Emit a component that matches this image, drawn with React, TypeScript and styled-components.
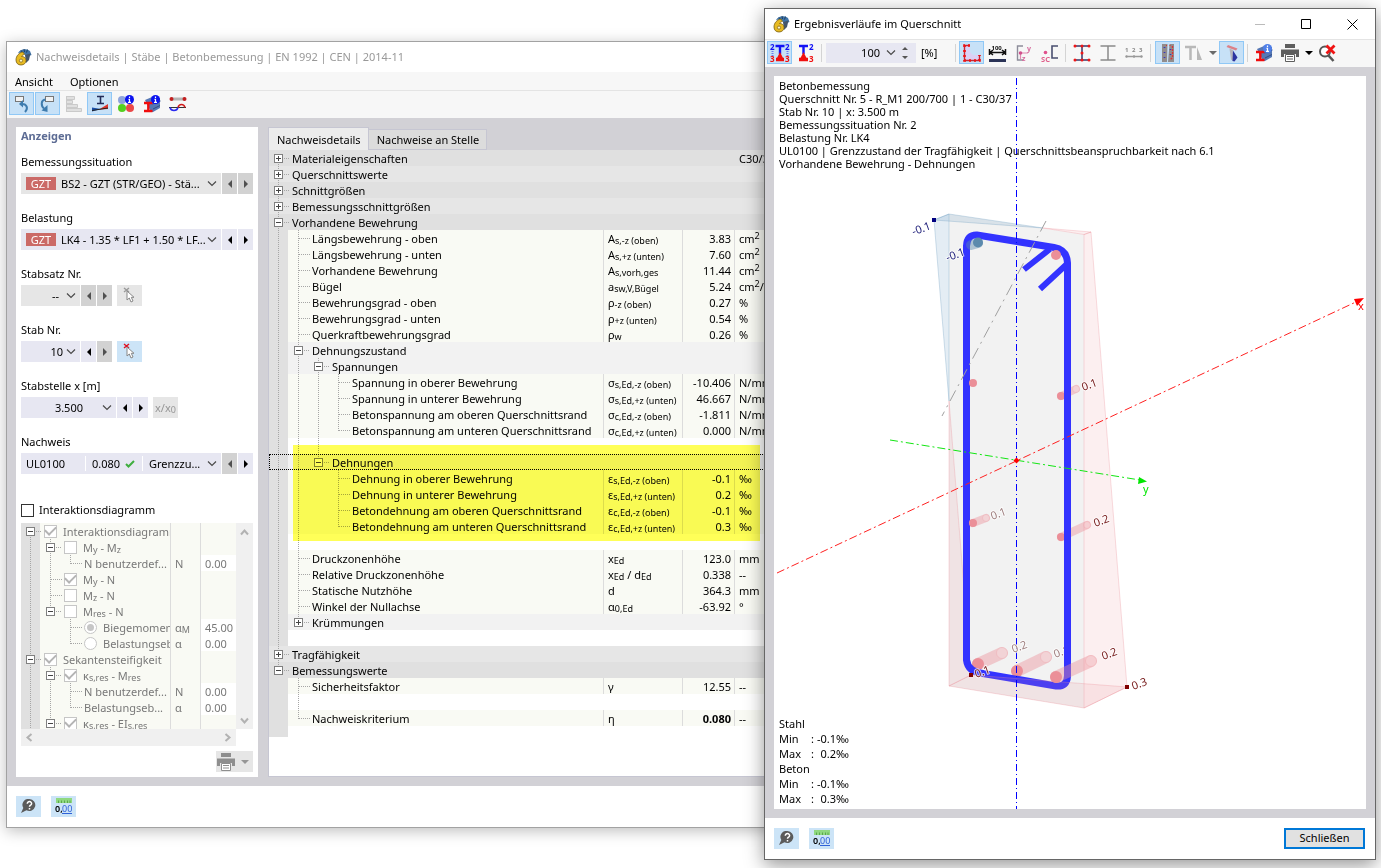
import React from 'react';
import styled, { createGlobalStyle, css } from 'styled-components';

const FONT = '"Noto Sans", "Open Sans", sans-serif';

const GlobalStyle = createGlobalStyle`
  * { box-sizing: border-box; }
  body { margin: 0; background: #fff; color: #000; font: 11px/16px ${FONT}; }
  button, select, input { font: inherit; color: inherit; margin: 0; }
  sub, sup { font-size: 9px; line-height: 0; }
  sub { vertical-align: -1px; }
  sup { vertical-align: 4px; }
`;

/* ---------- windows ---------- */

const Desktop = styled.main`
  display: grid;
  grid-template-columns: minmax(0, 758fr) minmax(0, 612fr);
  align-items: start;
  min-height: 100vh;
  padding: 8px 5px 8px 6px;
`;

const WindowFrame = styled.section<{ $active?: boolean }>`
  grid-row: 1;
  display: flex;
  flex-direction: column;
  min-width: 0;
  background: #fff;
  border: 1px solid ${p => (p.$active ? '#666' : '#a2a2a2')};
  box-shadow: ${p => (p.$active ? '0 5px 18px rgba(0,0,0,.42)' : '0 3px 14px rgba(0,0,0,.26)')};
  ${p =>
    p.$active
      ? css`grid-column: 2; z-index: 1;`
      : css`grid-column: 1 / 3; margin: 33px 16px 0 0;`}
`;

const TitleBar = styled.header<{ $muted?: boolean }>`
  display: flex;
  align-items: center;
  height: 30px;
  padding-left: 7px;
  gap: 4px;
  color: ${p => (p.$muted ? '#999' : '#000')};
`;

const WindowTitle = styled.h1`
  flex: 1;
  margin: 0;
  font-size: 11px;
  font-weight: 400;
  white-space: nowrap;
`;

const CaptionButtons = styled.div`
  display: flex;
`;

const CaptionButton = styled.button`
  width: 46px;
  height: 30px;
  padding: 0;
  border: 0;
  background: none;
  display: grid;
  place-items: center;
`;

const MenuBar = styled.nav`
  display: flex;
  gap: 17px;
  height: 18px;
  padding: 0 8px;
  background: #f7f7f7;
`;

const MenuItem = styled.button`
  border: 0;
  padding: 2px 0 0;
  background: none;
  line-height: 16px;
`;

const ToolBar = styled.div`
  display: flex;
  align-items: center;
  gap: 1px;
  height: 28px;
  padding: 0 2px 2px;
  background: #f7f7f7;
  border-top: 1px solid #e4e4e4;
`;

const ToolButton = styled.button<{ $on?: boolean }>`
  flex: none;
  width: 25px;
  height: 23px;
  padding: 0;
  display: grid;
  place-items: center;
  border: 1px solid ${p => (p.$on ? '#90c8f6' : 'transparent')};
  background: ${p => (p.$on ? '#c7e1f7' : 'none')};
`;

const DropArrow = styled.button<{ $dim?: boolean }>`
  flex: none;
  width: 11px;
  height: 23px;
  padding: 0;
  border: 0;
  background: none;
  color: ${p => (p.$dim ? '#6a6a6a' : '#000')};
  display: grid;
  place-items: center;
`;

const Divider = styled.span<{ $wide?: boolean }>`
  flex: none;
  width: 1px;
  height: 18px;
  margin: 0 ${p => (p.$wide ? 3 : 2)}px;
  background: #d4d4d4;
`;

const Workspace = styled.div`
  display: flex;
  gap: 10px;
  padding: 9px;
  background: #d2d1d6;
`;

const Footer = styled.footer`
  display: flex;
  align-items: center;
  gap: 10px;
  height: 41px;
  padding: 0 10px 1px 9px;
`;

const FlatButton = styled.button`
  flex: none;
  width: 25px;
  height: 21px;
  padding: 0;
  border: 0;
  background: #cce4f7;
  display: grid;
  place-items: center;
  &:disabled { background: #e6e6e6; color: #969696; }
`;

const CloseButton = styled.button`
  width: 81px;
  height: 21px;
  margin-left: auto;
  padding: 0;
  border: 2px solid #0078d7;
  background: #e1e1e1;
`;

/* ---------- left panel ---------- */

const SidePanel = styled.aside`
  flex: none;
  width: 242px;
  padding: 1px 5px 5px;
  background: #fff;
`;

const PanelTitle = styled.h2`
  margin: 0 0 10px;
  font-size: 11px;
  line-height: 16px;
  font-weight: 700;
  color: #5d6c94;
`;

const Field = styled.div`
  display: flex;
  flex-direction: column;
  gap: 3px;
  margin-bottom: 16px;
`;

const FieldLabel = styled.label`
  line-height: 16px;
`;

const ControlRow = styled.div`
  display: flex;
  gap: 1px;
`;

const Combo = styled.div<{ $width: number; $off?: boolean }>`
  display: flex;
  align-items: center;
  flex: none;
  width: ${p => p.$width}px;
  height: 21px;
  padding: 0 4px 0 5px;
  background: ${p => (p.$off ? '#e6e6e6' : '#e7e7f2')};
`;

const ComboSelect = styled.select<{ $right?: boolean; $gap?: number }>`
  flex: 1;
  min-width: 0;
  height: 21px;
  padding: 0 ${p => p.$gap ?? 0}px 0 0;
  border: 0;
  appearance: none;
  background: none;
  opacity: 1;
  text-align: ${p => (p.$right ? 'right' : 'left')};
  text-align-last: ${p => (p.$right ? 'right' : 'left')};
  &:disabled { color: #000; opacity: 1; }
`;

const Badge = styled.span`
  width: 30px;
  height: 13px;
  margin-right: 5px;
  background: #cb6a67;
  color: #fff;
  line-height: 13px;
  text-align: center;
`;

const ComboPart = styled.span<{ $width: number }>`
  display: flex;
  align-items: center;
  gap: 5px;
  width: ${p => p.$width}px;
  height: 15px;
  margin-right: 6px;
  border-right: 1px solid #fff;
`;

const StepButton = styled.button`
  flex: none;
  width: 15px;
  height: 21px;
  padding: 0;
  border: 0;
  background: #e7e7f2;
  display: grid;
  place-items: center;
  &:disabled { background: #d2d2d2; color: #505050; }
`;

const SideButton = styled(FlatButton)`
  margin-left: 4px;
`;

const CheckLabel = styled.label`
  display: flex;
  align-items: center;
  gap: 5px;
  margin: 28px 0 5px;
`;

const Tick = styled.input`
  flex: none;
  appearance: none;
  width: 13px;
  height: 13px;
  border: 1px solid #333;
  background: #fff;
  display: grid;
  place-items: center;
  &:disabled { border-color: #c6c6c6; }
  &[type='radio'] { border-radius: 50%; }
  &[type='checkbox']:checked::before {
    content: '';
    width: 5px;
    height: 9px;
    margin-top: -3px;
    border: solid #b4b4b4;
    border-width: 0 2px 2px 0;
    transform: rotate(45deg);
  }
  &[type='radio']:checked::before {
    content: '';
    width: 7px;
    height: 7px;
    border-radius: 50%;
    background: #c6c6c6;
  }
`;

const ScrollArea = styled.div`
  display: grid;
  grid-template-columns: 1fr 17px;
  grid-template-rows: 206px 17px;
`;

const ScrollView = styled.div`
  overflow: hidden;
  background: linear-gradient(90deg, #e0e0e0 19px, #f9faf3 19px);
  color: #787878;
`;

const ScrollBar = styled.div<{ $horizontal?: boolean }>`
  display: flex;
  flex-direction: ${p => (p.$horizontal ? 'row' : 'column')};
  justify-content: space-between;
  align-items: center;
  padding: ${p => (p.$horizontal ? '0 4px' : '5px 0 4px')};
  background: #f0f0f0;
  color: #b2b2b2;
`;

const PanelActions = styled.div`
  display: flex;
  justify-content: flex-end;
  margin-top: 5px;
`;

const PrintButton = styled(FlatButton)`
  width: 37px;
  grid-template-columns: 20px 17px;
`;

/* ---------- tree tables ---------- */

const TreeTable = styled.table`
  width: 100%;
  border-collapse: collapse;
  border-spacing: 0;
  table-layout: fixed;
`;

type Tone = 'dark' | 'mid' | 'sub' | 'leaf' | 'gap';
const TONES: Record<Tone, string> = {
  dark: '#e0e0e0',
  mid: '#e6e6e6',
  sub: '#f2f2f2',
  leaf: '#f9faf4',
  gap: '#fff',
};

const TreeRow = styled.tr<{ $tone: Tone; $selected?: boolean }>`
  height: 16px;
  background: ${p => TONES[p.$tone]};
  ${p => p.$selected && 'outline: 1px dotted #000; outline-offset: -1px;'}
`;

const Cell = styled.td<{ $line?: boolean; $right?: boolean; $bold?: boolean; $white?: boolean }>`
  height: 16px;
  padding: 2px ${p => (p.$right ? 3 : 0)}px 0 5px;
  line-height: 14px;
  white-space: nowrap;
  text-align: ${p => (p.$right ? 'right' : 'left')};
  font-weight: ${p => (p.$bold ? 700 : 400)};
  box-shadow: ${p => (p.$line ? 'inset 1px 0 #dcdcdc' : 'none')};
  ${p => p.$white && 'background: #fff;'}
`;

const NameCell = styled.td`
  height: 16px;
  padding: 0;
`;

const NameLine = styled.div`
  display: flex;
  align-items: center;
  height: 16px;
  line-height: 16px;
  white-space: nowrap;
  overflow-x: clip;
  overflow-y: visible;
`;

const NameText = styled.span`
  padding: 2px 0 0 4px;
`;

const TickSlot = styled.span`
  display: flex;
  flex: none;
  width: 19px;
  padding-left: 4px;
`;

const GuideCell = styled.svg<{ $gutter?: boolean; $shade?: boolean }>`
  flex: none;
  width: ${p => (p.$gutter ? 19 : 20)}px;
  height: 16px;
  overflow: visible;
  background: ${p => (p.$shade ? '#e0e0e0' : 'none')};
`;

/* v: line through, t: tee, l: elbow, + and -: fold box, letters after the box give its line ends (u, d) */
const Guide = ({ kind, first, shade }: { kind: string; first: boolean; shade: boolean }) => {
  const cx = first ? 9.5 : 10.5;
  const head = kind[0];
  const box = head === '+' || head === '-';
  const up = box ? kind.includes('u') : 'vtl'.includes(head);
  const down = box ? kind.includes('d') : 'vt'.includes(head);
  const dots = { stroke: '#a6a6a6', strokeDasharray: '1 1', fill: 'none' };
  return (
    <GuideCell $gutter={first} $shade={shade && first} aria-hidden>
      {up && <path d={`M${cx} 0V9`} {...dots} />}
      {down && <path d={`M${cx} 8V16`} {...dots} />}
      {(head === 't' || head === 'l') && <path d={`M${cx + 0.5} 8.5h11`} {...dots} />}
      {box && (
        <>
          <path d={`M${cx + 5.5} 8.5h6`} {...dots} />
          <rect x={cx - 4} y="4.5" width="8" height="8" fill="#fff" stroke="#808080" />
          <path d={`M${cx - 2.5} 8.5h5${head === '+' ? `M${cx} 6v5` : ''}`} stroke="#444" fill="none" />
        </>
      )}
    </GuideCell>
  );
};

interface Row {
  guides: string[];
  tone: Tone;
  name?: React.ReactNode;
  symbol?: React.ReactNode;
  value?: string;
  unit?: React.ReactNode;
  bold?: boolean;
  selected?: boolean;
}

const S = ({ b, children }: { b: string; children: React.ReactNode }) => (
  <>
    {b}
    <sub>{children}</sub>
  </>
);
const cm2 = <>cm<sup>2</sup></>;
const nmm2 = <>N/mm<sup>2</sup></>;

const leaf = (guides: string[], name: string, symbol: React.ReactNode, value: string, unit: React.ReactNode, bold = false): Row => ({
  guides, tone: 'leaf', name, symbol, value, unit, bold,
});

const ROWS: Row[] = [
  { guides: ['+d'], tone: 'dark', name: 'Materialeigenschaften', unit: 'C30/37' },
  { guides: ['+ud'], tone: 'mid', name: 'Querschnittswerte' },
  { guides: ['+ud'], tone: 'dark', name: 'Schnittgrößen' },
  { guides: ['+ud'], tone: 'mid', name: 'Bemessungsschnittgrößen' },
  { guides: ['-ud'], tone: 'dark', name: 'Vorhandene Bewehrung' },
  leaf(['v', 't'], 'Längsbewehrung - oben', <S b="A">s,-z (oben)</S>, '3.83', cm2),
  leaf(['v', 't'], 'Längsbewehrung - unten', <S b="A">s,+z (unten)</S>, '7.60', cm2),
  leaf(['v', 't'], 'Vorhandene Bewehrung', <S b="A">s,vorh,ges</S>, '11.44', cm2),
  leaf(['v', 't'], 'Bügel', <S b="a">sw,V,Bügel</S>, '5.24', <>{cm2}/m</>),
  leaf(['v', 't'], 'Bewehrungsgrad - oben', <S b="ρ">-z (oben)</S>, '0.27', '%'),
  leaf(['v', 't'], 'Bewehrungsgrad - unten', <S b="ρ">+z (unten)</S>, '0.54', '%'),
  leaf(['v', 't'], 'Querkraftbewehrungsgrad', <S b="ρ">w</S>, '0.26', '%'),
  { guides: ['v', '-ud'], tone: 'sub', name: 'Dehnungszustand' },
  { guides: ['v', 'v', '-ud'], tone: 'sub', name: 'Spannungen' },
  leaf(['v', 'v', 'v', 't'], 'Spannung in oberer Bewehrung', <S b="σ">s,Ed,-z (oben)</S>, '-10.406', nmm2),
  leaf(['v', 'v', 'v', 't'], 'Spannung in unterer Bewehrung', <S b="σ">s,Ed,+z (unten)</S>, '46.667', nmm2),
  leaf(['v', 'v', 'v', 't'], 'Betonspannung am oberen Querschnittsrand', <S b="σ">c,Ed,-z (oben)</S>, '-1.811', nmm2),
  leaf(['v', 'v', 'v', 'l'], 'Betonspannung am unteren Querschnittsrand', <S b="σ">c,Ed,+z (unten)</S>, '0.000', nmm2),
  { guides: ['v', 'v', 'v'], tone: 'gap' },
  { guides: ['v', 'v', '-u'], tone: 'sub', name: 'Dehnungen', selected: true },
  leaf(['v', 'v', ' ', 't'], 'Dehnung in oberer Bewehrung', <S b="ε">s,Ed,-z (oben)</S>, '-0.1', '‰'),
  leaf(['v', 'v', ' ', 't'], 'Dehnung in unterer Bewehrung', <S b="ε">s,Ed,+z (unten)</S>, '0.2', '‰'),
  leaf(['v', 'v', ' ', 't'], 'Betondehnung am oberen Querschnittsrand', <S b="ε">c,Ed,-z (oben)</S>, '-0.1', '‰'),
  leaf(['v', 'v', ' ', 'l'], 'Betondehnung am unteren Querschnittsrand', <S b="ε">c,Ed,+z (unten)</S>, '0.3', '‰'),
  { guides: ['v', 'v'], tone: 'gap' },
  leaf(['v', 't'], 'Druckzonenhöhe', <S b="x">Ed</S>, '123.0', 'mm'),
  leaf(['v', 't'], 'Relative Druckzonenhöhe', <>x<sub>Ed</sub> / d<sub>Ed</sub></>, '0.338', '--'),
  leaf(['v', 't'], 'Statische Nutzhöhe', 'd', '364.3', 'mm'),
  leaf(['v', 't'], 'Winkel der Nullachse', <S b="α">0,Ed</S>, '-63.92', '°'),
  { guides: ['v', '+u'], tone: 'sub', name: 'Krümmungen' },
  { guides: ['v'], tone: 'gap' },
  { guides: ['+ud'], tone: 'mid', name: 'Tragfähigkeit' },
  { guides: ['-u'], tone: 'dark', name: 'Bemessungswerte' },
  leaf([' ', 't'], 'Sicherheitsfaktor', 'γ', '12.55', '--'),
  { guides: [' ', 'v'], tone: 'gap' },
  leaf([' ', 'l'], 'Nachweiskriterium', 'η', '0.080', '--', true),
];

interface OptionRow {
  guides: string[];
  name: React.ReactNode;
  tick?: 'checkbox' | 'radio';
  on?: boolean;
  symbol?: React.ReactNode;
  value?: string;
}

const OPTIONS: OptionRow[] = [
  { guides: ['-d'], tick: 'checkbox', on: true, name: 'Interaktionsdiagramm' },
  { guides: ['v', '-ud'], tick: 'checkbox', name: <>M<sub>y</sub> - M<sub>z</sub></> },
  { guides: ['v', 'v', 'l'], name: 'N benutzerdef...', symbol: 'N', value: '0.00' },
  { guides: ['v', 't'], tick: 'checkbox', on: true, name: <>M<sub>y</sub> - N</> },
  { guides: ['v', 't'], tick: 'checkbox', name: <>M<sub>z</sub> - N</> },
  { guides: ['v', '-u'], tick: 'checkbox', name: <>M<sub>res</sub> - N</> },
  { guides: ['v', ' ', 't'], tick: 'radio', on: true, name: 'Biegemoment', symbol: <S b="α">M</S>, value: '45.00' },
  { guides: ['v', ' ', 'l'], tick: 'radio', name: 'Belastungseb', symbol: 'α', value: '0.00' },
  { guides: ['-ud'], tick: 'checkbox', on: true, name: 'Sekantensteifigkeit' },
  { guides: ['v', '-ud'], tick: 'checkbox', on: true, name: <>κ<sub>s,res</sub> - M<sub>res</sub></> },
  { guides: ['v', 'v', 't'], name: 'N benutzerdef...', symbol: 'N', value: '0.00' },
  { guides: ['v', 'v', 'l'], name: 'Belastungseb...', symbol: 'α', value: '0.00' },
  { guides: ['v', '-ud'], tick: 'checkbox', on: true, name: <>κ<sub>s,res</sub> - EI<sub>s,res</sub></> },
];

/* ---------- right panel ---------- */

const DetailPanel = styled.div`
  flex: 1;
  min-width: 0;
  display: flex;
  flex-direction: column;
`;

const Tabs = styled.div`
  display: flex;
  align-items: flex-end;
  height: 23px;
`;

const Tab = styled.button<{ $active?: boolean }>`
  height: ${p => (p.$active ? 23 : 21)}px;
  padding: ${p => (p.$active ? '2px' : '0')} 7px 0 8px;
  border: 1px solid #c6c6d2;
  border-bottom-width: ${p => (p.$active ? 0 : 1)}px;
  border-left-width: ${p => (p.$active ? 1 : 0)}px;
  background: ${p => (p.$active ? '#ececec' : '#dcdcdc')};
`;

const DetailBody = styled.div`
  position: relative;
  flex: 1;
  background: #fff;
  border: 1px solid #c6c6d2;
  border-top: 0;
`;

const GutterTail = styled.div`
  width: 19px;
  height: 11px;
  background: #e0e0e0;
`;

const Marker = styled.div`
  position: absolute;
  top: 295px;
  left: 24px;
  width: 467px;
  height: 96px;
  background: #ffff58;
  mix-blend-mode: multiply;
  pointer-events: none;
`;

/* ---------- plot ---------- */

const ScaleInput = styled.input`
  width: 54px;
  height: 20px;
  padding: 0;
  border: 0;
  background: none;
  text-align: right;
`;

const ScaleBox = styled.div`
  display: flex;
  align-items: center;
  gap: 6px;
  width: 90px;
  height: 20px;
  margin: 0 4px 0 1px;
  background: #e7e7f2;
`;

const UnitLabel = styled.label`
  width: 31px;
`;

const PlotStage = styled.div`
  flex: 1;
  display: grid;
  min-width: 0;
  background: #fff;
`;

const Drawing = styled.svg`
  grid-area: 1 / 1;
  display: block;
  width: 100%;
  height: auto;
  font-family: ${FONT};
  font-size: 11px;
`;

const Caption = styled.div`
  grid-area: 1 / 1;
  padding: 3px 5px;
  line-height: 13px;
`;

const Stats = styled.div`
  grid-area: 1 / 1;
  align-self: end;
  justify-self: start;
  padding: 0 5px 3px;
  line-height: 15px;
`;

const StatLine = styled.div`
  display: grid;
  grid-template-columns: 32px 4px 21px 14px;
`;

const StatValue = styled.span`
  text-align: right;
`;

/* ---------- icons ---------- */

const svgProps = { fill: 'none', 'aria-hidden': true } as const;

const AppIcon = () => (
  <svg width="18" height="18" viewBox="0 0 18 18" {...svgProps}>
    <path d="M4 5C6 1 12 0 16 3l1.500 4-5 2C11 5 8 4 4 5z" fill="#3f74a8" />
    <path d="M7 2.500l1.500 2M10 1l.5 3M13.500 1.500l-1 3" stroke="#1f3f60" />
    <path d="M11 7l5.500-1.500L15 12l-3 3z" fill="#44566b" />
    <path d="M9 4C5 4.500 2 8 2 12c0 3 2 5 5 5s5-2 5-4.500S10 8.300 7.500 8.500c.5-1 1.500-1.800 3-2z" fill="#e8bb22" stroke="#7a5f14" strokeWidth=".8" />
    <circle cx="7" cy="12.600" r="1.600" fill="#fff5c4" stroke="#7a5f14" strokeWidth=".7" />
  </svg>
);

const Chevron = () => (
  <svg width="10" height="6" viewBox="0 0 10 6" {...svgProps}>
    <path d="M1 .5l4 4 4-4" stroke="#4a4a4a" strokeWidth="1.200" />
  </svg>
);

const Arrow = ({ dir }: { dir: 'l' | 'r' | 'd' }) => (
  <svg width="8" height="8" viewBox="0 0 8 8" {...svgProps}>
    <path d={{ l: 'M6 0v8L2 4z', r: 'M2 0v8l4-4z', d: 'M0 2h8L4 6z' }[dir]} fill="currentColor" />
  </svg>
);

const ScrollMark = ({ d }: { d: string }) => (
  <svg width="9" height="9" viewBox="0 0 9 9" {...svgProps}>
    <path d={d} stroke="currentColor" strokeWidth="2" />
  </svg>
);

const PickIcon = ({ cross }: { cross: string }) => (
  <svg width="17" height="17" viewBox="0 0 17 17" {...svgProps}>
    <path d="M3 1l5 4M8 1L3 5" stroke={cross} strokeWidth="1.400" />
    <path d="M6 4v9l2.300-2 1.700 4 2-1-1.700-3.700H13z" fill="#fff" stroke="#888" />
  </svg>
);

const PrinterIcon = ({ color }: { color: string }) => (
  <svg width="18" height="18" viewBox="0 0 18 18" {...svgProps}>
    <path d="M4 0h10v4H4zM0 5.500h18V13h-3v-3H3v3H0z" fill={color} />
    <path d="M4.500 10.500h9v7h-9z" fill="#fff" stroke={color} />
    <path d="M6 12.500h6M6 15h6" stroke={color} />
  </svg>
);

const HelpIcon = () => (
  <svg width="15" height="15" viewBox="0 0 15 15" {...svgProps}>
    <path d="M8.500 0a6 6 0 1 1-3 11.300L0 14l2.300-5A6 6 0 0 1 8.500 0z" fill="#5b5b5b" />
    <path d="M6.300 4.700c0-3 4.500-2.600 4.300 0-.1 1.500-2.100 1.500-2.100 3.100M8.500 9v1.600" stroke="#fff" strokeWidth="1.500" />
  </svg>
);

const UnitsIcon = () => (
  <svg width="18" height="16" viewBox="0 0 18 16" {...svgProps}>
    <rect x="1" y="0" width="16" height="5" fill="#8fd880" />
    <path d="M3.500 2.500V5M6.500 2.500V5M9.500 2.500V5M12.500 2.500V5M15 2.500V5" stroke="#5aa84c" />
    <text x="0" y="14" fontSize="9" fontWeight="600" fill="#000" fontFamily={FONT}>0,</text>
    <text x="7" y="14" fontSize="9" fill="#2f62d8" fontFamily={FONT}>00</text>
    <path d="M7 15.500h10" stroke="#2f62d8" />
  </svg>
);

const InfoBall = ({ x, fill = '#0a12f0' }: { x: number; fill?: string }) => (
  <>
    <circle cx={x} cy="4.500" r="4.500" fill={fill} />
    <path d={`M${x} 1.500v1.500M${x - 1} 4.300h1v3M${x - 1.5} 7.300h3`} stroke="#fff" strokeWidth="1.200" />
  </>
);

const BeamInfoIcon = ({ ball }: { ball?: string }) => (
  <svg width="18" height="18" viewBox="0 0 18 18" {...svgProps}>
    <path d="M2 5l7-3 8 1v10l-7 4H8z" fill="#5577b4" />
    <path d="M9.500 9l8-3M10 14l7-3.500" stroke="#2f4c86" />
    <path d="M1 8h8.500M5.300 8v8M1 16h8.500" stroke="#f00d0d" strokeWidth="2.400" />
    <InfoBall x={12.5} fill={ball} />
  </svg>
);

const UndoViewIcon = () => (
  <svg width="18" height="18" viewBox="0 0 18 18" {...svgProps}>
    <rect x="2.500" y="1.500" width="8" height="5" fill="#f2f2f2" stroke="#777" />
    <path d="M12 17c3.500-3.500 2-8-3-8" stroke="#3f7cae" strokeWidth="2" />
    <path d="M10 5v7.500L6 9z" fill="#3f7cae" />
  </svg>
);

const RedoViewIcon = () => (
  <svg width="18" height="18" viewBox="0 0 18 18" {...svgProps}>
    <rect x="6.500" y="1.500" width="8" height="5" fill="#f2f2f2" stroke="#777" />
    <path d="M6.500 4.500C1.500 5 2 11 5 13.500" stroke="#3f7cae" strokeWidth="2" />
    <path d="M2.500 15.500l6 1.500V10z" fill="#3f7cae" />
  </svg>
);

const BarsIcon = () => (
  <svg width="18" height="18" viewBox="0 0 18 18" {...svgProps}>
    <path d="M1.500 1v16M1.500 1.500h8v3h-8M1.500 5.500h6v3h-6M1.500 9.500h11v3h-11M1.500 13.500h15v3h-15" fill="#e0e0e0" stroke="#cacaca" />
  </svg>
);

const SlopeIcon = () => (
  <svg width="18" height="18" viewBox="0 0 18 18" {...svgProps}>
    <path d="M6 1.500h7M9.500 1.500v7M6 8.500h7" stroke="#222b58" strokeWidth="1.600" />
    <path d="M1 16.500v-4l9 1.500z" fill="#1a4fa8" />
    <path d="M17 9v5l-9 .5z" fill="#e0352b" />
    <path d="M1 15.500L17 13" stroke="#222" />
  </svg>
);

const SpheresIcon = () => (
  <svg width="18" height="18" viewBox="0 0 18 18" {...svgProps}>
    <circle cx="5" cy="5" r="4" fill="#8ea4dc" />
    <circle cx="5" cy="13" r="4" fill="#55cf1f" />
    <circle cx="13" cy="13" r="4" fill="#ea4848" />
    <InfoBall x={12.5} />
  </svg>
);

const CurvesIcon = () => (
  <svg width="18" height="18" viewBox="0 0 18 18" {...svgProps}>
    <path d="M2 4h14" stroke="#b5b5b5" strokeWidth="3" />
    <circle cx="2.500" cy="4" r="2" fill="#c21f1f" />
    <circle cx="15.500" cy="4" r="2" fill="#c21f1f" />
    <path d="M0 12.500h17" stroke="#333" />
    <path d="M1 12.500c1 4 7 4 8 0" stroke="#2a2af0" strokeWidth="1.500" />
    <path d="M9 12.500c1-4 6-4 7 0" stroke="#d01818" strokeWidth="1.500" />
  </svg>
);

const NumText = ({ x, y, fill, size = 8, children }: { x: number; y: number; fill: string; size?: number; children: string }) => (
  <text x={x} y={y} fill={fill} fontSize={size} fontWeight="700" fontFamily={FONT}>{children}</text>
);

const SectionPairIcon = () => (
  <svg width="20" height="20" viewBox="0 0 20 20" {...svgProps}>
    <path d="M5.500 3h9M10 3v8" stroke="#1212f5" strokeWidth="2.400" />
    <path d="M6 16.500h8" stroke="#f01010" strokeWidth="3.500" />
    <path d="M10 9l3.500 7h-7z" fill="#f01010" />
    <path d="M2.500 8v5M17.500 8v5" stroke="#6a7cf0" strokeDasharray="1 1" strokeWidth="2" />
    <NumText x={0} y={7} fill="#1212f5">2</NumText>
    <NumText x={15} y={7} fill="#1212f5">2</NumText>
    <NumText x={0} y={19} fill="#f01010">3</NumText>
    <NumText x={15} y={19} fill="#f01010">3</NumText>
  </svg>
);

const SectionSingleIcon = () => (
  <svg width="18" height="20" viewBox="0 0 18 20" {...svgProps}>
    <path d="M2 3h9M6.500 3v8" stroke="#1212f5" strokeWidth="2.400" />
    <path d="M2 16.500h9" stroke="#f01010" strokeWidth="3.500" />
    <path d="M6.500 9l3.500 7H3z" fill="#f01010" />
    <NumText x={12} y={7} fill="#1212f5">2</NumText>
    <NumText x={12} y={19} fill="#f01010">3</NumText>
  </svg>
);

const OutlineIcon = () => (
  <svg width="18" height="18" viewBox="0 0 18 18" {...svgProps}>
    <path d="M7 1.500H1.500v15h15V11H10L7 8z" fill="#dcd0f4" />
    <path d="M7 1.500H1.500v15h15V11" stroke="#c42838" strokeWidth="1.400" />
    <path d="M7 1.500H1.500v15h15V11" stroke="#f01010" strokeWidth="2.600" strokeDasharray="2 3" />
  </svg>
);

const DimensionIcon = () => (
  <svg width="19" height="18" viewBox="0 0 19 18" {...svgProps}>
    <NumText x={3.5} y={5.5} fill="#111" size={6}>100</NumText>
    <path d="M1.500 5v6M17.500 5v6M2 8.500h15M5 6L2 8.500 5 11M14 6l3 2.500L14 11" stroke="#111" strokeWidth="1.500" />
    <path d="M1 16.500h17" stroke="#2b3357" strokeWidth="3" />
  </svg>
);

const AxesIcon = () => (
  <svg width="18" height="18" viewBox="0 0 18 18" {...svgProps}>
    <path d="M8 2H2.500v14H8" stroke="#8d8d9a" strokeWidth="1.400" />
    <path d="M5.500 9H13M5.500 9v6" stroke="#e08ab0" strokeWidth="1.200" />
    <circle cx="5.500" cy="9" r="1.800" fill="#d0508c" />
    <NumText x={12} y={7} fill="#d46a9c" size={7}>y</NumText>
    <NumText x={7} y={17} fill="#d46a9c" size={7}>z</NumText>
  </svg>
);

const ShearCentreIcon = () => (
  <svg width="18" height="18" viewBox="0 0 18 18" {...svgProps}>
    <path d="M17 2h-6v12h6" stroke="#4a4f70" strokeWidth="1.600" />
    <circle cx="4.500" cy="8.500" r="1.800" fill="#e0508c" />
    <NumText x={0} y={17.5} fill="#e0608c" size={7.5}>SC</NumText>
  </svg>
);

const IPointsIcon = ({ dots }: { dots: boolean }) => (
  <svg width="18" height="18" viewBox="0 0 18 18" {...svgProps}>
    <path d="M1.500 2h15M9 2v14M1.500 16h15" stroke={dots ? '#37396b' : '#8a8a8a'} strokeWidth="1.500" />
    {dots &&
      [[2, 2], [9, 2], [16, 2], [9, 9], [2, 16], [9, 16], [16, 16]].map(([x, y]) => (
        <circle key={`${x}-${y}`} cx={x} cy={y} r="1.500" fill="#f01616" />
      ))}
  </svg>
);

const NumberingIcon = () => (
  <svg width="18" height="12" viewBox="0 0 18 12" {...svgProps}>
    <NumText x={0} y={5} fill="#8a8a8a" size={6}>1</NumText>
    <NumText x={7} y={5} fill="#8a8a8a" size={6}>2</NumText>
    <NumText x={14} y={5} fill="#8a8a8a" size={6}>3</NumText>
    <path d="M1 9.500h16" stroke="#9a9a9a" strokeWidth="1.500" />
    <circle cx="1.500" cy="9.500" r="1.200" fill="#999" />
    <circle cx="9" cy="9.500" r="1.200" fill="#999" />
    <circle cx="16.500" cy="9.500" r="1.200" fill="#999" />
  </svg>
);

const RebarIcon = () => (
  <svg width="14" height="18" viewBox="0 0 14 18" {...svgProps}>
    <path d="M1 0h5.500L6 18H1zM8.500 0H13v18H7z" fill="#918c8c" />
    <path d="M3.500 3v1M3.500 8v1M3.500 13v1M9.500 5v1M9.500 10v1" stroke="#3434c0" strokeWidth="1.600" />
    <path d="M11.500 2v11.500L9 16" stroke="#e03030" strokeWidth="1.300" strokeDasharray="2 1" />
    <path d="M5 1.500h1M8.500 1.500h1" stroke="#e03030" />
  </svg>
);

const TSectionIcon = () => (
  <svg width="18" height="16" viewBox="0 0 18 16" {...svgProps}>
    <path d="M0 2h11M5.500 2v13" stroke="#b8b8b8" strokeWidth="2.500" />
    <path d="M12 2l5 13h-5z" fill="#b8b8b8" />
  </svg>
);

const TorsionIcon = () => (
  <svg width="14" height="18" viewBox="0 0 14 18" {...svgProps}>
    <path d="M4.500 4.500L8 6v11l-2-1.500z" fill="#b4b4bc" />
    <path d="M8 6.500l4.500 7-3 4L7.500 17z" fill="#2c34a0" />
    <path d="M3 1l9.500 3.500-1.500 2L1.500 3z" fill="#dc8088" />
  </svg>
);

const ResetZoomIcon = () => (
  <svg width="19" height="18" viewBox="0 0 19 18" {...svgProps}>
    <circle cx="7" cy="7.500" r="5" fill="#fff" stroke="#555" strokeWidth="2" />
    <path d="M10.500 11.500l5 5.500" stroke="#555" strokeWidth="2.600" />
    <path d="M8.500 1.500l8 8M16.500 1.500l-8 8" stroke="#f01414" strokeWidth="2.800" />
  </svg>
);

const StepperIcon = () => (
  <svg width="7" height="14" viewBox="0 0 7 14" {...svgProps}>
    <path d="M0 4h6L3 1zM0 10h6l-3 3z" fill="#555" />
  </svg>
);

/* ---------- cross-section drawing ---------- */

const PINK = '#eb8f98';

const Rod = ({ from, to, r }: { from: [number, number]; to: [number, number]; r: number }) => (
  <>
    <line x1={from[0]} y1={from[1]} x2={to[0]} y2={to[1]} stroke={PINK} strokeOpacity=".42" strokeWidth={r * 2} strokeLinecap="round" />
    <circle cx={to[0]} cy={to[1]} r={r - 0.5} fill="#fff" fillOpacity=".2" stroke={PINK} strokeOpacity=".25" />
    <circle cx={from[0]} cy={from[1]} r={r} fill={PINK} />
  </>
);

const Value = ({ x, y, color, children }: { x: number; y: number; color: string; children: string }) => (
  <text
    transform={`translate(${x} ${y}) rotate(-20)`}
    textAnchor="middle"
    dominantBaseline="central"
    fill={color}
    stroke="#fff"
    strokeWidth="2"
    strokeOpacity=".7"
    paintOrder="stroke"
  >
    {children}
  </text>
);

const CrossSection = () => (
  <Drawing viewBox="774 76 592 733" role="img" aria-label="Dehnungen im Querschnitt">
    <polygon points="949,214 1084,234.500 1084,708 949,686" fill="#f2f2f2" />
    <g fill="#7aa7c7" fillOpacity=".2" stroke="#7aa7c7" strokeOpacity=".35">
      <polygon points="934,220 949,214 949,401" />
      <polygon points="934,220 949,214 1043,228" />
    </g>
    <g stroke={PINK} strokeOpacity=".3" fill={PINK} fillOpacity=".14">
      <polygon points="1043,228 1091,232 1084,234.500" />
      <polygon points="949,401 971,675 949,686" />
    </g>

    <path
      d="M1050 249L1024 269.500M1067 264L1040 289"
      stroke="#3333ff" strokeWidth="6" fill="none"
    />
    <Rod from={[978, 664]} to={[1002, 653]} r={6} />
    <Rod from={[1017, 671]} to={[1046, 657]} r={6} />
    <Rod from={[1061, 396]} to={[1076, 389]} r={4} />
    <Rod from={[1061, 537]} to={[1087, 525]} r={4} />
    <Value x={1061} y={651} color="#a08080">0.1</Value>
    <path
      d="M966.500 246Q967 234.500 977 235L1054 247.500Q1067 250 1067.500 263V676Q1067 687 1056 686L983 673.500Q968 672 966.500 660Z"
      stroke="#3333ff" strokeWidth="7" fill="none"
    />
    <Rod from={[973, 523]} to={[986, 518]} r={4} />
    <Rod from={[1056, 677]} to={[1091, 661]} r={6} />
    <circle cx="973" cy="383" r="4" fill={PINK} />
    <circle cx="1056" cy="255" r="5" fill={PINK} />
    <line x1="971" y1="245" x2="978" y2="243" stroke="#5c8aad" strokeOpacity=".45" strokeWidth="10" strokeLinecap="round" />
    <circle cx="978" cy="242.500" r="5" fill="#5c8aad" />

    <g stroke={PINK} strokeOpacity=".3" fill={PINK} fillOpacity=".14">
      <polygon points="1084,234.500 1091,232 1127,687 1084,708" />
      <polygon points="949,686 971,675 1127,687 1084,708" />
    </g>

    <g fill="none">
      <path d="M1046 221L942 416" stroke="#a0a0a0" strokeDasharray="12 5 2 5" />
      <path d="M777 573L1358 301" stroke="#ff2020" strokeDasharray="8 3 2 3" />
      <path d="M890 440L1140 480" stroke="#12e612" strokeDasharray="8 3 2 3" />
      <path d="M1016.500 78V809" stroke="#0000ff" strokeDasharray="7 3 1 3" />
    </g>
    <polygon points="1364,298 1354,299 1357,306" fill="#ff0000" />
    <polygon points="1147,481.500 1138,484 1139,477" fill="#00e600" />
    <text x="1358" y="310" fill="#ff0000">x</text>
    <text x="1143" y="493" fill="#00e600">y</text>
    <polygon points="1016.500,457.500 1019.500,460.500 1016.500,463.500 1013.500,460.500" fill="#ff0000" />
    <rect x="932" y="218" width="4" height="4" fill="#000080" />
    <rect x="969" y="673" width="4" height="4" fill="#800000" />
    <rect x="1125" y="685" width="4" height="4" fill="#800000" />

    <Value x={921} y={228} color="#20207a">-0.1</Value>
    <Value x={955} y={254} color="#20207a">-0.1</Value>
    <Value x={1089} y={384} color="#7a2020">0.1</Value>
    <Value x={998} y={513} color="#a08080">0.1</Value>
    <Value x={1101} y={520} color="#7a2020">0.2</Value>
    <Value x={1019} y={646} color="#a08080">0.2</Value>
    <Value x={1109} y={653} color="#7a2020">0.2</Value>
    <Value x={982} y={671} color="#7a2020">0.1</Value>
    <Value x={1139} y={683} color="#7a2020">0.3</Value>
  </Drawing>
);

/* ---------- composed parts ---------- */

const Steps = ({ prevOff, nextOff }: { prevOff?: boolean; nextOff?: boolean }) => (
  <>
    <StepButton disabled={prevOff} aria-label="Zurück"><Arrow dir="l" /></StepButton>
    <StepButton disabled={nextOff} aria-label="Weiter"><Arrow dir="r" /></StepButton>
  </>
);

const FooterTools = () => (
  <>
    <FlatButton aria-label="Hilfe"><HelpIcon /></FlatButton>
    <FlatButton aria-label="Einheiten"><UnitsIcon /></FlatButton>
  </>
);

const SettingsPanel = () => (
  <SidePanel>
    <PanelTitle>Anzeigen</PanelTitle>
    <Field>
      <FieldLabel htmlFor="situation">Bemessungssituation</FieldLabel>
      <ControlRow>
        <Combo $width={200} $off>
          <Badge>GZT</Badge>
          <ComboSelect id="situation" disabled><option>BS2 - GZT (STR/GEO) - Stä...</option></ComboSelect>
          <Chevron />
        </Combo>
        <Steps prevOff nextOff />
      </ControlRow>
    </Field>
    <Field>
      <FieldLabel htmlFor="load">Belastung</FieldLabel>
      <ControlRow>
        <Combo $width={200}>
          <Badge>GZT</Badge>
          <ComboSelect id="load"><option>LK4 - 1.35 * LF1 + 1.50 * LF...</option></ComboSelect>
          <Chevron />
        </Combo>
        <Steps />
      </ControlRow>
    </Field>
    <Field>
      <FieldLabel htmlFor="memberset">Stabsatz Nr.</FieldLabel>
      <ControlRow>
        <Combo $width={59} $off>
          <ComboSelect id="memberset" $right $gap={7} disabled><option>--</option></ComboSelect>
          <Chevron />
        </Combo>
        <Steps prevOff nextOff />
        <SideButton disabled aria-label="Stabsatz wählen"><PickIcon cross="#999" /></SideButton>
      </ControlRow>
    </Field>
    <Field>
      <FieldLabel htmlFor="member">Stab Nr.</FieldLabel>
      <ControlRow>
        <Combo $width={59}>
          <ComboSelect id="member" $right $gap={3}><option>10</option></ComboSelect>
          <Chevron />
        </Combo>
        <Steps nextOff />
        <SideButton aria-label="Stab wählen"><PickIcon cross="#e01020" /></SideButton>
      </ControlRow>
    </Field>
    <Field>
      <FieldLabel htmlFor="location">Stabstelle x [m]</FieldLabel>
      <ControlRow>
        <Combo $width={95}>
          <ComboSelect id="location" $right $gap={19}><option>3.500</option></ComboSelect>
          <Chevron />
        </Combo>
        <Steps />
        <SideButton disabled><span>x/x<sub>0</sub></span></SideButton>
      </ControlRow>
    </Field>
    <Field>
      <FieldLabel htmlFor="check">Nachweis</FieldLabel>
      <ControlRow>
        <Combo $width={200}>
          <ComboPart $width={60}>UL0100</ComboPart>
          <ComboPart $width={51}>
            0.080
            <svg width="10" height="8" viewBox="0 0 10 8" {...svgProps}>
              <path d="M1 4l2.500 2.500L9 1" stroke="#3fae3f" strokeWidth="2" />
            </svg>
          </ComboPart>
          <ComboSelect id="check"><option>Grenzzu...</option></ComboSelect>
          <Chevron />
        </Combo>
        <Steps prevOff />
      </ControlRow>
    </Field>
    <CheckLabel>
      <Tick type="checkbox" />
      Interaktionsdiagramm
    </CheckLabel>
    <ScrollArea>
      <ScrollView>
        <TreeTable>
          <colgroup>
            <col />
            <col width="30" />
            <col width="36" />
          </colgroup>
          <tbody>
            {OPTIONS.map((o, i) => (
              <TreeRow key={i} $tone="leaf">
                <NameCell>
                  <NameLine as="label">
                    {o.guides.map((g, k) => <Guide key={k} kind={g} first={k === 0} shade />)}
                    {o.tick && (
                      <TickSlot>
                        <Tick type={o.tick} name={o.tick === 'radio' ? 'plane' : undefined} defaultChecked={o.on} disabled />
                      </TickSlot>
                    )}
                    <NameText>{o.name}</NameText>
                  </NameLine>
                </NameCell>
                <Cell $line>{o.symbol}</Cell>
                <Cell $line $white={!!o.value}>{o.value}</Cell>
              </TreeRow>
            ))}
          </tbody>
        </TreeTable>
      </ScrollView>
      <ScrollBar>
        <ScrollMark d="M1 6.500l3.500-4 3.500 4" />
        <ScrollMark d="M1 2.500l3.500 4 3.500-4" />
      </ScrollBar>
      <ScrollBar $horizontal>
        <ScrollMark d="M6.500 1l-4 3.500 4 3.500" />
        <ScrollMark d="M2.500 1l4 3.500-4 3.500" />
      </ScrollBar>
    </ScrollArea>
    <PanelActions>
      <PrintButton disabled aria-label="Drucken">
        <PrinterIcon color="#8e8e8e" />
        <Arrow dir="d" />
      </PrintButton>
    </PanelActions>
  </SidePanel>
);

const DetailTable = () => (
  <DetailPanel>
    <Tabs role="tablist">
      <Tab role="tab" aria-selected $active>Nachweisdetails</Tab>
      <Tab role="tab" aria-selected={false}>Nachweise an Stelle</Tab>
    </Tabs>
    <DetailBody>
      <TreeTable>
        <colgroup>
          <col width="334" />
          <col width="79" />
          <col width="52" />
          <col />
        </colgroup>
        <tbody>
          {ROWS.map((r, i) => {
            const line = r.tone === 'leaf';
            return (
              <TreeRow key={i} $tone={r.tone} $selected={r.selected}>
                <NameCell>
                  <NameLine>
                    {r.guides.map((g, k) => (
                      <Guide key={k} kind={g} first={k === 0} shade={r.guides.length > 1 || r.tone === 'gap'} />
                    ))}
                    <NameText>{r.name}</NameText>
                  </NameLine>
                </NameCell>
                <Cell $line={line}>{r.symbol}</Cell>
                <Cell $line={line} $right $bold={r.bold}>{r.value}</Cell>
                <Cell $line={line}>{r.unit}</Cell>
              </TreeRow>
            );
          })}
        </tbody>
      </TreeTable>
      <GutterTail />
      <Marker />
    </DetailBody>
  </DetailPanel>
);

const ResultToolBar = () => (
  <ToolBar>
    <ToolButton $on aria-label="Alle Schnitte"><SectionPairIcon /></ToolButton>
    <ToolButton aria-label="Einzelschnitt"><SectionSingleIcon /></ToolButton>
    <Divider />
    <ScaleBox>
      <ScaleInput id="scale" defaultValue="100" />
      <Chevron />
      <StepperIcon />
    </ScaleBox>
    <UnitLabel htmlFor="scale">[%]</UnitLabel>
    <Divider />
    <ToolButton $on aria-label="Umriss"><OutlineIcon /></ToolButton>
    <ToolButton aria-label="Bemaßung"><DimensionIcon /></ToolButton>
    <ToolButton aria-label="Hauptachsen"><AxesIcon /></ToolButton>
    <ToolButton aria-label="Schubmittelpunkt"><ShearCentreIcon /></ToolButton>
    <Divider />
    <ToolButton aria-label="Spannungspunkte"><IPointsIcon dots /></ToolButton>
    <ToolButton aria-label="Profil"><IPointsIcon dots={false} /></ToolButton>
    <ToolButton aria-label="Nummerierung"><NumberingIcon /></ToolButton>
    <Divider $wide />
    <ToolButton $on aria-label="Bewehrung"><RebarIcon /></ToolButton>
    <ToolButton aria-label="Querschnittsteile"><TSectionIcon /></ToolButton>
    <DropArrow $dim aria-label="Mehr"><Arrow dir="d" /></DropArrow>
    <ToolButton $on aria-label="Verlauf"><TorsionIcon /></ToolButton>
    <Divider />
    <ToolButton aria-label="Querschnittsinfo"><BeamInfoIcon ball="#4f7fe8" /></ToolButton>
    <ToolButton aria-label="Drucken"><PrinterIcon color="#5e5e5e" /></ToolButton>
    <DropArrow aria-label="Druckoptionen"><Arrow dir="d" /></DropArrow>
    <ToolButton aria-label="Zoom zurücksetzen"><ResetZoomIcon /></ToolButton>
  </ToolBar>
);

const CAPTION = [
  'Betonbemessung',
  'Querschnitt Nr. 5 - R_M1 200/700 | 1 - C30/37',
  'Stab Nr. 10 | x: 3.500 m',
  'Bemessungssituation Nr. 2',
  'Belastung Nr. LK4',
  'UL0100 | Grenzzustand der Tragfähigkeit | Querschnittsbeanspruchbarkeit nach 6.1',
  'Vorhandene Bewehrung - Dehnungen',
];

const STATS = [
  { material: 'Stahl', min: '-0.1', max: '0.2' },
  { material: 'Beton', min: '-0.1', max: '0.3' },
];

export default function App() {
  return (
    <>
      <GlobalStyle />
      <Desktop>
        <WindowFrame>
          <TitleBar $muted>
            <AppIcon />
            <WindowTitle>Nachweisdetails | Stäbe | Betonbemessung | EN 1992 | CEN | 2014-11</WindowTitle>
          </TitleBar>
          <MenuBar>
            <MenuItem>Ansicht</MenuItem>
            <MenuItem>Optionen</MenuItem>
          </MenuBar>
          <ToolBar>
            <ToolButton $on aria-label="Vorherige Ansicht"><UndoViewIcon /></ToolButton>
            <ToolButton $on aria-label="Nächste Ansicht"><RedoViewIcon /></ToolButton>
            <ToolButton aria-label="Diagramm"><BarsIcon /></ToolButton>
            <ToolButton $on aria-label="Verlauf am Stab"><SlopeIcon /></ToolButton>
            <ToolButton aria-label="Materialinfo"><SpheresIcon /></ToolButton>
            <ToolButton aria-label="Querschnittsinfo"><BeamInfoIcon /></ToolButton>
            <ToolButton aria-label="Ergebnisverläufe"><CurvesIcon /></ToolButton>
          </ToolBar>
          <Workspace>
            <SettingsPanel />
            <DetailTable />
          </Workspace>
          <Footer>
            <FooterTools />
          </Footer>
        </WindowFrame>

        <WindowFrame $active>
          <TitleBar>
            <AppIcon />
            <WindowTitle>Ergebnisverläufe im Querschnitt</WindowTitle>
            <CaptionButtons>
              <CaptionButton aria-label="Minimieren">
                <svg width="10" height="10" {...svgProps}><path d="M0 5.500h10" stroke="#bbb" /></svg>
              </CaptionButton>
              <CaptionButton aria-label="Maximieren">
                <svg width="10" height="10" {...svgProps}><path d="M.5.5h9v9h-9z" stroke="#000" /></svg>
              </CaptionButton>
              <CaptionButton aria-label="Fenster schließen">
                <svg width="11" height="11" {...svgProps}><path d="M.5.5l10 10M10.500.5l-10 10" stroke="#000" /></svg>
              </CaptionButton>
            </CaptionButtons>
          </TitleBar>
          <ResultToolBar />
          <Workspace>
            <PlotStage>
              <CrossSection />
              <Caption>
                {CAPTION.map(line => <div key={line}>{line}</div>)}
              </Caption>
              <Stats>
                {STATS.map(s => (
                  <React.Fragment key={s.material}>
                    <div>{s.material}</div>
                    <StatLine><span>Min</span><span>:</span><StatValue>{s.min}</StatValue><span>‰</span></StatLine>
                    <StatLine><span>Max</span><span>:</span><StatValue>{s.max}</StatValue><span>‰</span></StatLine>
                  </React.Fragment>
                ))}
              </Stats>
            </PlotStage>
          </Workspace>
          <Footer>
            <FooterTools />
            <CloseButton>Schließen</CloseButton>
          </Footer>
        </WindowFrame>
      </Desktop>
    </>
  );
}
